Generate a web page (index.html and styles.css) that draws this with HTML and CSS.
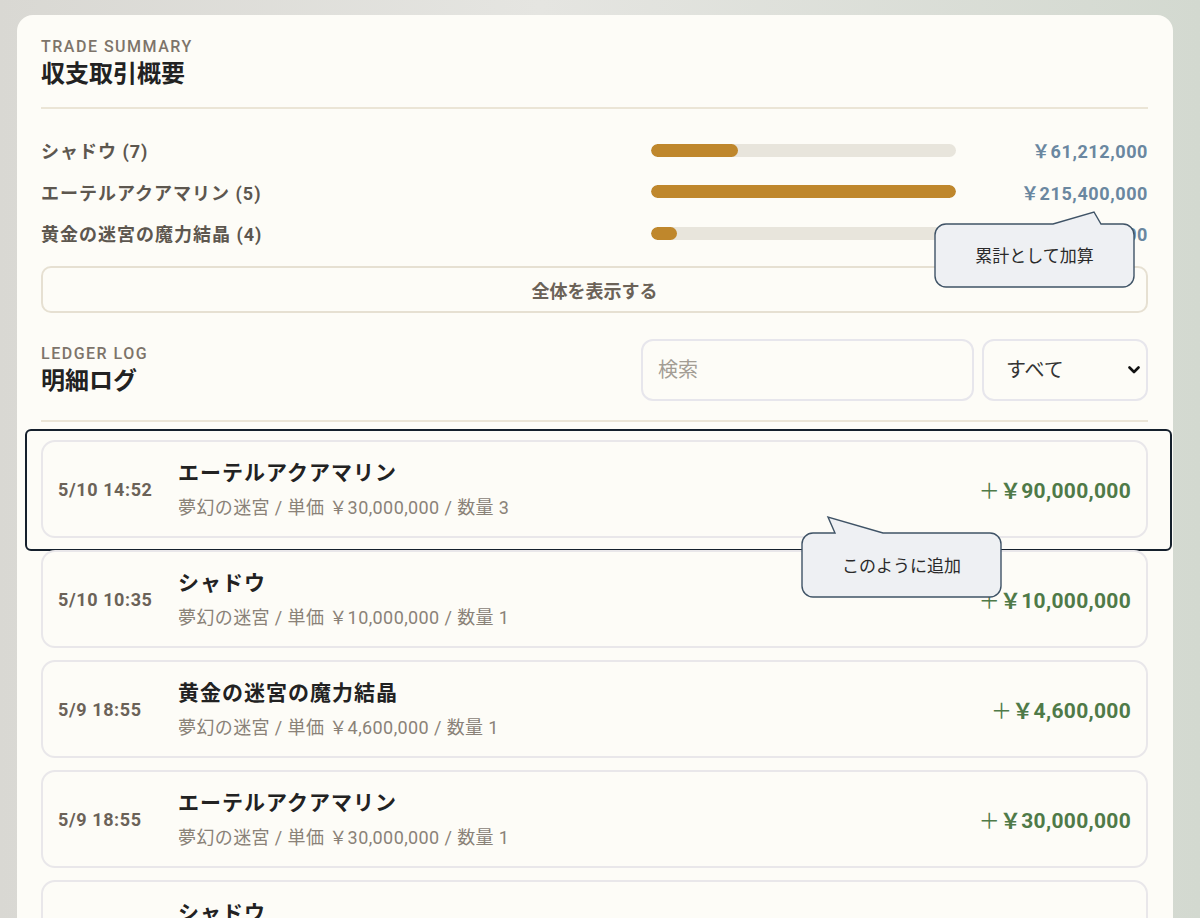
FILE: index.html
```html
<!DOCTYPE html>
<html lang="ja">
<head>
	<meta charset="utf-8">
	<title>収支取引概要</title>
	<link rel="stylesheet" href="styles.css">
</head>
<body>
	<div class="panel">
		<div class="sectionHead">
			<div class="eyebrow">TRADE SUMMARY</div>
			<h1 class="title">収支取引概要</h1>
		</div>

		<div class="summary">
			<div class="sumRow">
				<span class="sumLabel">シャドウ (7)</span>
				<span class="track"><span class="fill" style="width:28.4%"></span></span>
				<span class="sumValue">￥61,212,000</span>
			</div>
			<div class="sumRow">
				<span class="sumLabel">エーテルアクアマリン (5)</span>
				<span class="track"><span class="fill" style="width:100%"></span></span>
				<span class="sumValue">￥215,400,000</span>
			</div>
			<div class="sumRow">
				<span class="sumLabel">黄金の迷宮の魔力結晶 (4)</span>
				<span class="track"><span class="fill" style="width:8.5%"></span></span>
				<span class="sumValue">￥18,400,000</span>
			</div>
		</div>

		<button class="showAll">全体を表示する</button>

		<div class="ledgerHead">
			<div>
				<div class="eyebrow">LEDGER LOG</div>
				<h2 class="title">明細ログ</h2>
			</div>
			<div class="filters">
				<input class="search" type="text" placeholder="検索">
				<div class="selectWrap">
					<select class="kind">
						<option>すべて</option>
						<option>売却</option>
						<option>購入</option>
					</select>
					<svg class="chevron" width="12" height="8" viewBox="0 0 12 8"><path d="M1.5 1.5 L6 6 L10.5 1.5" fill="none" stroke="#111" stroke-width="2.6" stroke-linecap="round" stroke-linejoin="round"/></svg>
				</div>
			</div>
		</div>

		<div class="ledger">
			<div class="entry">
				<div class="time">5/10 14:52</div>
				<div class="info">
					<div class="name">エーテルアクアマリン</div>
					<div class="meta">夢幻の迷宮 / 単価 ￥30,000,000 / 数量 3</div>
				</div>
				<div class="amount"><span class="plus">＋</span>￥90,000,000</div>
				<div class="focusRing"></div>
			</div>
			<div class="entry">
				<div class="time">5/10 10:35</div>
				<div class="info">
					<div class="name">シャドウ</div>
					<div class="meta">夢幻の迷宮 / 単価 ￥10,000,000 / 数量 1</div>
				</div>
				<div class="amount"><span class="plus">＋</span>￥10,000,000</div>
			</div>
			<div class="entry">
				<div class="time">5/9 18:55</div>
				<div class="info">
					<div class="name">黄金の迷宮の魔力結晶</div>
					<div class="meta">夢幻の迷宮 / 単価 ￥4,600,000 / 数量 1</div>
				</div>
				<div class="amount"><span class="plus">＋</span>￥4,600,000</div>
			</div>
			<div class="entry">
				<div class="time">5/9 18:55</div>
				<div class="info">
					<div class="name">エーテルアクアマリン</div>
					<div class="meta">夢幻の迷宮 / 単価 ￥30,000,000 / 数量 1</div>
				</div>
				<div class="amount"><span class="plus">＋</span>￥30,000,000</div>
			</div>
			<div class="entry">
				<div class="time">5/9 18:40</div>
				<div class="info">
					<div class="name">シャドウ</div>
					<div class="meta">夢幻の迷宮 / 単価 ￥8,600,000 / 数量 1</div>
				</div>
				<div class="amount"><span class="plus">＋</span>￥8,600,000</div>
			</div>
		</div>

		<!-- speech bubbles -->
		<div class="bubble bubbleSum">
			<svg width="203" height="79" viewBox="0 0 203 79"><path d="M13 14 H120 L161 2 L168 14 H190 A11 11 0 0 1 201 25 V66 A11 11 0 0 1 190 77 H13 A11 11 0 0 1 2 66 V25 A11 11 0 0 1 13 14 Z" fill="#eef0f3" stroke="#3f5366" stroke-width="1.4"/></svg>
			<span class="bubbleText">累計として加算</span>
		</div>
		<div class="bubble bubbleAdd">
			<svg width="203" height="84" viewBox="0 0 203 84"><path d="M13 18 H35 L28 2 L83 18 H190 A11 11 0 0 1 201 29 V71 A11 11 0 0 1 190 82 H13 A11 11 0 0 1 2 71 V29 A11 11 0 0 1 13 18 Z" fill="#eef0f3" stroke="#3f5366" stroke-width="1.4"/></svg>
			<span class="bubbleText">このように追加</span>
		</div>
	</div>
</body>
</html>
```

FILE: styles.css
```css
html, body{
	margin:0;
	height:100%;
}
body{
	background:linear-gradient(90deg, #d9d8d3 0%, #e5e5e1 45%, #d3d9d0 100%);
	font-family:Roboto, "Noto Sans CJK JP", sans-serif;
	color:#222;
	overflow:hidden;
}
.panel{
	position:relative;
	margin:15px 27px 0 17px;
	min-height:903px;
	box-sizing:border-box;
	padding:22px 25px 0 24px;
	background:#fdfcf7;
	border-radius:16px 16px 0 0;
}
.sectionHead{
	padding-bottom:18px;
	border-bottom:2px solid #ebe5d6;
}
.eyebrow{
	font-size:16px;
	line-height:20px;
	font-weight:500;
	color:#7d746a;
	letter-spacing:1.5px;
}
.title{
	margin:2px 0 0;
	font-size:24px;
	line-height:30px;
	font-weight:700;
	color:#222;
}

/* summary bars */
.summary{
	display:flex;
	flex-direction:column;
	gap:13.5px;
	padding-top:27px;
}
.sumRow{
	display:grid;
	grid-template-columns:1fr 305px 192px;
	align-items:center;
	height:28px;
}
.sumLabel{
	font-size:18px;
	font-weight:700;
	color:#5d574f;
	letter-spacing:1px;
}
.track{
	display:block;
	height:13px;
	border-radius:7px;
	background:#e8e5dc;
	overflow:hidden;
}
.fill{
	display:block;
	height:100%;
	border-radius:7px;
	background:#bf872c;
}
.sumValue{
	text-align:right;
	font-size:18px;
	font-weight:700;
	color:#6a87a0;
	letter-spacing:0.6px;
}
.showAll{
	display:block;
	width:100%;
	height:47px;
	margin-top:19px;
	border:2px solid #e6e0d2;
	border-radius:10px;
	background:#fdfcf7;
	font-family:Roboto, "Noto Sans CJK JP", sans-serif;
	font-size:18px;
	font-weight:700;
	color:#6b6258;
}

/* ledger */
.ledgerHead{
	display:flex;
	justify-content:space-between;
	align-items:center;
	margin-top:26px;
	padding-bottom:19px;
	border-bottom:2px solid #ebe5d6;
}
.filters{
	display:flex;
	gap:8px;
}
.search{
	width:333px;
	height:62px;
	box-sizing:border-box;
	padding:0 15px;
	border:2px solid #e7e6ec;
	border-radius:12px;
	background:#fdfcf7;
	font-family:Roboto, "Noto Sans CJK JP", sans-serif;
	font-size:20px;
	outline:none;
}
.search::placeholder{
	color:#a39d94;
}
.selectWrap{
	position:relative;
}
.kind{
	appearance:none;
	width:166px;
	height:62px;
	box-sizing:border-box;
	padding:0 22px;
	border:2px solid #e7e6ec;
	border-radius:12px;
	background:#fdfcf7;
	font-family:Roboto, "Noto Sans CJK JP", sans-serif;
	font-size:20px;
	color:#333;
}
.chevron{
	position:absolute;
	right:8px;
	top:27px;
	pointer-events:none;
}
.ledger{
	display:flex;
	flex-direction:column;
	gap:12px;
	padding-top:18px;
}
.entry{
	position:relative;
	display:grid;
	grid-template-columns:120px 1fr auto;
	align-items:center;
	height:98px;
	box-sizing:border-box;
	padding:0 15px;
	border:2px solid #e9e7ea;
	border-radius:14px;
	background:#fdfcf7;
}
.time{
	font-size:18px;
	font-weight:700;
	color:#6b6258;
	letter-spacing:0.6px;
}
.name{
	font-size:21px;
	line-height:26px;
	font-weight:700;
	color:#222;
	letter-spacing:1px;
}
.meta{
	margin-top:11px;
	font-size:18px;
	line-height:22px;
	color:#8a8278;
	letter-spacing:0.4px;
}
.amount{
	font-size:21px;
	font-weight:700;
	color:#4f7a48;
	letter-spacing:0.3px;
}
.plus{
	font-weight:400;
}
.focusRing{
	position:absolute;
	left:-18px;
	top:-13px;
	right:-26px;
	bottom:-15px;
	border:2px solid #15202c;
	border-radius:6px;
	pointer-events:none;
}

/* callouts */
.bubble{
	position:absolute;
	z-index:2;
}
.bubble svg{
	display:block;
}
.bubbleText{
	position:absolute;
	left:2px;
	right:2px;
	font-family:"Noto Sans CJK JP", sans-serif;
	font-size:17px;
	line-height:20px;
	text-align:center;
	color:#2a2a2a;
}
.bubbleSum{
	left:916px;
	top:195px;
}
.bubbleSum .bubbleText{
	top:35px;
}
.bubbleAdd{
	left:783px;
	top:500px;
}
.bubbleAdd .bubbleText{
	top:40px;
}
```
